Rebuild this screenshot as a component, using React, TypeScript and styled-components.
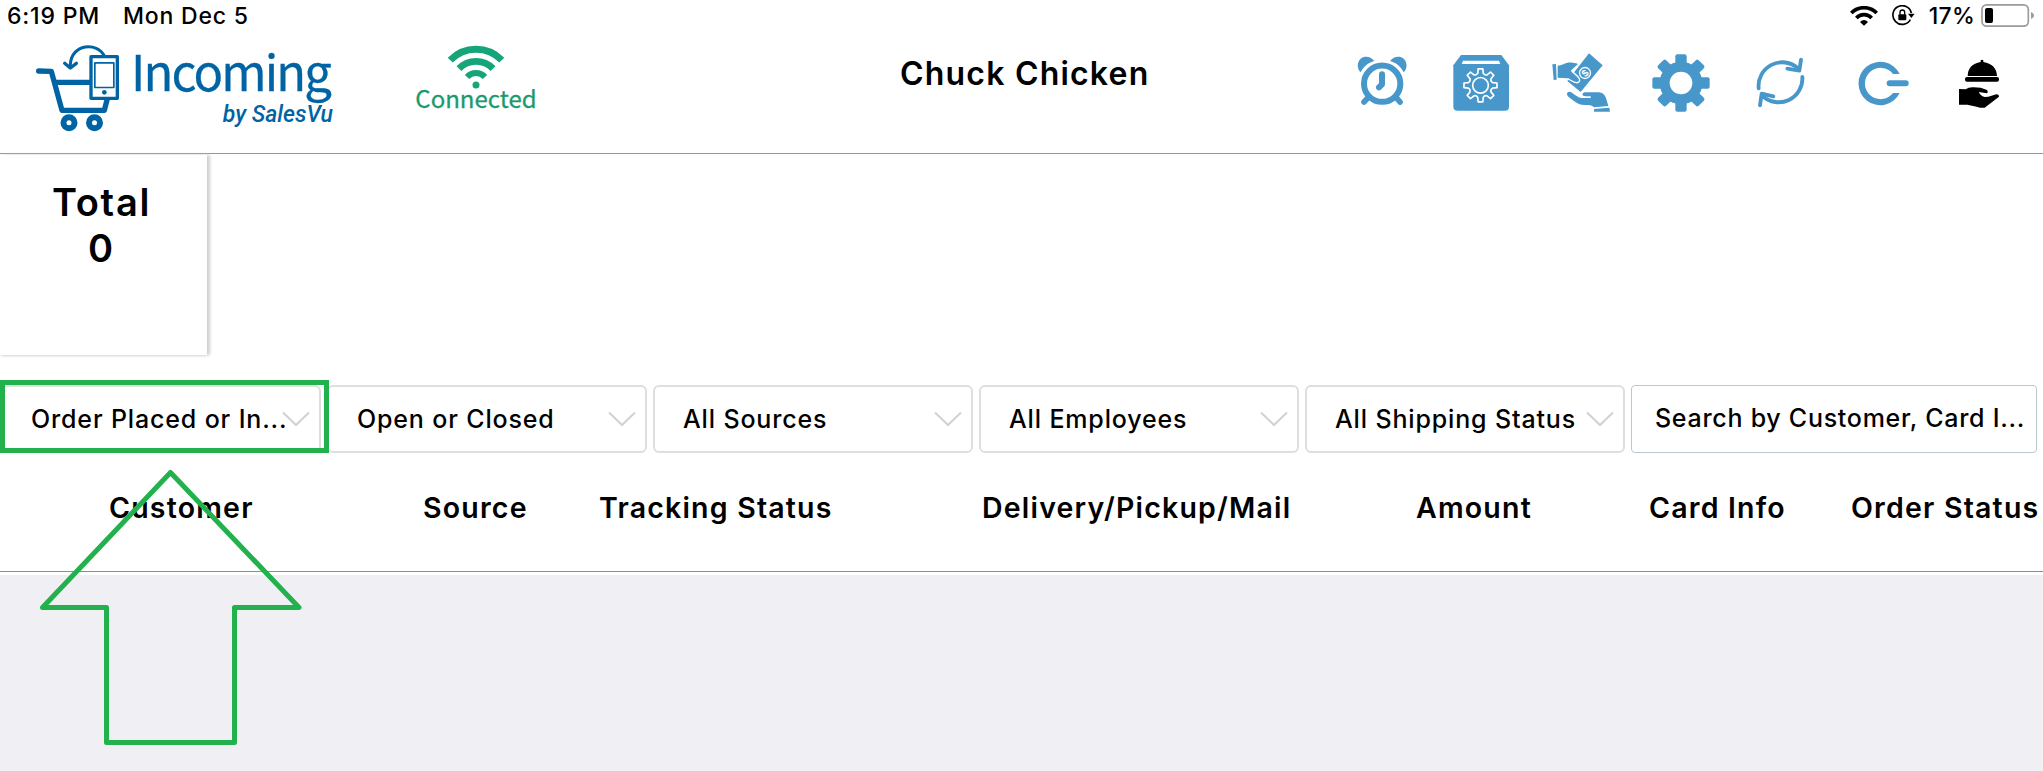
import styled, { createGlobalStyle } from "styled-components";

const BLUE = "#4797cb";
const NAVY = "#0064a4";
const GREEN = "#16a57a";

const filters = [
  "Order Placed or In...",
  "Open or Closed",
  "All Sources",
  "All Employees",
  "All Shipping Status",
];

const columns = [
  "Customer",
  "Source",
  "Tracking Status",
  "Delivery/Pickup/Mail",
  "Amount",
  "Card Info",
  "Order Status",
];

const polar = (cx: number, cy: number, r: number, deg: number) => {
  const a = (deg * Math.PI) / 180;
  return `${(cx + r * Math.cos(a)).toFixed(1)} ${(cy + r * Math.sin(a)).toFixed(1)}`;
};

// upward-facing arc, spread degrees to each side of the top
const arcPath = (cx: number, cy: number, r: number, spread: number) =>
  `M${polar(cx, cy, r, -90 - spread)}A${r} ${r} 0 0 1 ${polar(cx, cy, r, -90 + spread)}`;

// eight teeth with concave notches between them
const gearPath = (cx: number, cy: number, outer: number, root: number) => {
  let d = "";
  for (let i = 0; i < 8; i++) {
    const a = i * 45;
    d += `${i ? "L" : "M"}${polar(cx, cy, root, a - 13)}`;
    d += `L${polar(cx, cy, outer, a - 8)}L${polar(cx, cy, outer, a + 8)}`;
    d += `L${polar(cx, cy, root, a + 13)}`;
    d += `Q${polar(cx, cy, root - 5, a + 22.5)} ${polar(cx, cy, root, a + 32)}`;
  }
  return d + "Z";
};

function AlarmIcon() {
  const ear =
    "M92 127C81 116 80 97 92 86C104 76 122 79 133 93C114 98 100 110 92 127Z";
  return (
    <ToolIcon viewBox="33 39 240 240">
      <path d={ear} fill={BLUE} />
      <path d={ear} fill={BLUE} transform="matrix(-1 0 0 1 313 0)" />
      <g fill="none" stroke={BLUE} strokeWidth="18" strokeLinecap="round">
        <circle cx="156.5" cy="161" r="54.5" />
        <path d="M156 133V163L147 172" strokeLinejoin="round" />
        <path d="M114 203L102 216M199 203L210 216" strokeWidth="17" />
      </g>
    </ToolIcon>
  );
}

function PackageIcon() {
  return (
    <ToolIcon viewBox="333 39 240 240">
      <path
        d="M393 75H514L537 106V230Q537 242 525 242H383Q370 242 370 230V106Z"
        fill={BLUE}
      />
      <path d="M399 92H507L511 102H395Z" fill="#fff" />
      <g fill="none" stroke="#fff" strokeWidth="5" strokeLinejoin="round">
        <path d={gearPath(451.5, 166, 50, 37)} />
        <circle cx="451.5" cy="166" r="23.5" />
      </g>
    </ToolIcon>
  );
}

function PaymentIcon() {
  return (
    <ToolIcon viewBox="633 39 240 240">
      <path d="M777 70L818 106L752 186L712 153Z" fill={BLUE} />
      <circle cx="765" cy="129" r="16.5" fill="none" stroke="#fff" strokeWidth="4" />
      <Dollar x="765" y="139" transform="rotate(-48 765 129)">
        $
      </Dollar>
      <path
        d="M683 107C695 106 702 100 712 98C725 97 735 99 744 102L724 121C730 130 741 134 748 145C751 152 747 158 740 157C728 156 722 147 712 145L683 143Z"
        fill={BLUE}
      />
      <path
        d="M724 121C730 130 742 135 748 146C751 153 747 159 739 158C728 157 723 149 713 147"
        fill="none"
        stroke="#fff"
        strokeWidth="4"
      />
      <path d="M667 103L678 102L680 149L671 150Z" fill={BLUE} />
      <path
        d="M711 191C712 184 719 183 726 188C735 194 745 203 755 204H782V199H766C755 199 755 187 765 187H806C821 188 827 199 830 211L835 228L792 232C786 225 777 225 764 225C748 226 734 215 724 207C717 202 710 197 711 191Z"
        fill={BLUE}
      />
      <path d="M792 237L838 233L840 245H792Z" fill={BLUE} />
    </ToolIcon>
  );
}

function SettingsIcon() {
  return (
    <ToolIcon viewBox="933 39 240 240">
      <circle cx="1053" cy="159" r="49" fill="none" stroke={BLUE} strokeWidth="30" />
      {[0, 45, 90, 135, 180, 225, 270, 315].map((a) => (
        <rect
          key={a}
          x="1036"
          y="73"
          width="34"
          height="34"
          rx="6"
          fill={BLUE}
          transform={`rotate(${a} 1053 159)`}
        />
      ))}
    </ToolIcon>
  );
}

function RefreshIcon() {
  return (
    <ToolIcon viewBox="183 129 240 240">
      <g
        fill="none"
        stroke={BLUE}
        strokeWidth="11.5"
        strokeLinecap="round"
        strokeLinejoin="round"
      >
        <path d="M236 265A71 71 0 0 1 354 205" />
        <path d="M363 179L358 212L322 206" />
        <path d="M367 231A71 71 0 0 1 248 288" />
        <path d="M240 316L245 281L280 289" />
      </g>
    </ToolIcon>
  );
}

function LogoutIcon() {
  return (
    <ToolIcon viewBox="483 129 240 240">
      <path
        d="M659 222A65 65 0 1 0 659 279H639A47 47 0 1 1 639 222Z"
        fill={BLUE}
      />
      <rect x="620" y="241" width="66" height="18" rx="9" fill={BLUE} />
    </ToolIcon>
  );
}

function ServeIcon() {
  return (
    <ToolIcon viewBox="783 129 240 240">
      <path d="M863 228Q864 192 902 186V181Q906 177 910 181V186Q949 192 951 228Z" />
      <rect x="855" y="231" width="102" height="14" rx="6" />
      <path d="M837 267L857 268Q866 261 881 262L902 263L921 270Q926 278 920 280L897 276Q900 287 914 291L925 290L949 283Q957 283 957 290L914 323Q905 325 890 320L862 314H837Z" />
    </ToolIcon>
  );
}

function CartLogo() {
  return (
    <svg width="90" height="90" viewBox="105 129 270 270">
      <g
        fill="none"
        stroke={NAVY}
        strokeWidth="16"
        strokeLinecap="round"
        strokeLinejoin="round"
      >
        <path d="M116 213L154 214L186 331H313L321 300" />
        <path d="M164 247H270" strokeLinecap="butt" />
        <circle cx="207" cy="368" r="16.5" strokeWidth="18" />
        <circle cx="283.5" cy="368" r="16.5" strokeWidth="18" />
        <path
          d="M211 204V193C214 132 292 124 313 168"
          strokeWidth="9"
          strokeLinecap="butt"
        />
        <path d="M194 190L211 204L229 190" strokeWidth="10" />
      </g>
      <g fill="none" stroke={NAVY} strokeLinejoin="round">
        <rect x="273" y="170" width="79" height="125" fill="#fff" strokeWidth="10" />
        <rect x="284.5" y="188.5" width="57" height="74" strokeWidth="5" />
      </g>
      <circle cx="313" cy="277" r="7" fill={NAVY} />
    </svg>
  );
}

function SignalIcon() {
  return (
    <svg width="60" height="48" viewBox="258 129 180 144">
      <g fill="none" stroke={GREEN}>
        <path d={arcPath(348, 255, 107.5, 46)} strokeWidth="21" />
        <path d={arcPath(348, 255, 71, 46)} strokeWidth="20" />
        <path d={arcPath(348, 255, 36, 48)} strokeWidth="18" />
      </g>
      <circle cx="348" cy="255" r="10.5" fill={GREEN} />
    </svg>
  );
}

function WifiStatus() {
  return (
    <svg width="28" height="20" viewBox="510 15 84 60">
      <g fill="none" stroke="#000">
        <path d={arcPath(552, 73, 53, 46)} strokeWidth="11" />
        <path d={arcPath(552, 73, 32, 46)} strokeWidth="11" />
      </g>
      <path d="M552 74L540 63Q552 51 564 63Z" />
    </svg>
  );
}

function LockStatus() {
  return (
    <svg width="23" height="21" viewBox="635 14 69 63">
      <path d="M693 38A28 28 0 1 0 690 58" fill="none" stroke="#000" strokeWidth="5" />
      <path d="M683 40H703L693 53Z" />
      <rect x="654" y="42" width="24" height="18" rx="3" />
      <path d="M659 43V36A7 7 0 0 1 673 36V43" fill="none" stroke="#000" strokeWidth="4" />
    </svg>
  );
}

function BatteryStatus() {
  return (
    <svg width="54" height="23" viewBox="903 12 162 69">
      <rect
        x="906"
        y="14.5"
        width="139"
        height="64"
        rx="14"
        fill="none"
        stroke="#9b9b9b"
        strokeWidth="5"
      />
      <rect x="915" y="24" width="24" height="45" rx="6" />
      <path d="M1053 36Q1062 40 1062 46.5Q1062 53 1053 57Z" fill="#9b9b9b" />
    </svg>
  );
}

function Chevron() {
  return (
    <svg width="28" height="16" viewBox="0 0 28 16">
      <path d="M1 1.5L14 14L27 1.5" fill="none" stroke="#d1d1d6" strokeWidth="2" />
    </svg>
  );
}

export default function App() {
  return (
    <Page>
      <GlobalStyle />
      <StatusBar>
        <StatusText>6:19 PM</StatusText>
        <StatusText>Mon Dec 5</StatusText>
        <StatusIcons>
          <WifiStatus />
          <LockStatus />
          <StatusText>17%</StatusText>
          <BatteryStatus />
        </StatusIcons>
      </StatusBar>

      <Header>
        <Brand>
          <CartLogo />
          <BrandText>
            <BrandName>Incoming</BrandName>
            <BrandBy>by SalesVu</BrandBy>
          </BrandText>
        </Brand>
        <Connection>
          <SignalIcon />
          <ConnectionLabel>Connected</ConnectionLabel>
        </Connection>
        <StoreName>Chuck Chicken</StoreName>
        <Toolbar>
          <AlarmIcon />
          <PackageIcon />
          <PaymentIcon />
          <SettingsIcon />
          <RefreshIcon />
          <LogoutIcon />
          <ServeIcon />
        </Toolbar>
      </Header>

      <Summary>
        <TotalCard>
          <div>Total</div>
          <div>0</div>
        </TotalCard>
      </Summary>

      <FilterRow>
        {filters.map((label, i) => (
          <Filter key={label}>
            <span>{label}</span>
            <Chevron />
            {i === 0 && <Highlight />}
          </Filter>
        ))}
        <SearchBox>Search by Customer, Card I...</SearchBox>
      </FilterRow>

      <TableHead>
        {columns.map((name) => (
          <span key={name}>{name}</span>
        ))}
      </TableHead>
      <TableBody />

      <Arrow width="264" height="281" viewBox="38 467 264 281">
        <path
          d="M170.5 472.5L299 607.5H234.5V742.5H106.5V607.5H42.5Z"
          fill="none"
          stroke="#22b14c"
          strokeWidth="5"
          strokeLinejoin="round"
        />
      </Arrow>
    </Page>
  );
}

const GlobalStyle = createGlobalStyle`
  body {
    margin: 0;
    background-color: #fff;
  }
`;

const Page = styled.div`
  position: relative;
  display: flex;
  flex-direction: column;
  height: 771px;
  overflow: hidden;
  color: #000;
  font-family: Inter, "Liberation Sans", sans-serif;
`;

const StatusBar = styled.div`
  display: flex;
  gap: 23px;
  height: 32px;
  padding: 0 8px 0 7px;
`;

const StatusText = styled.span`
  font-size: 23px;
  font-weight: 500;
  line-height: 32px;
  letter-spacing: 0.8px;
  white-space: nowrap;
`;

const StatusIcons = styled.div`
  display: flex;
  align-items: center;
  gap: 14px;
  height: 31px;
  margin-left: auto;

  ${StatusText} {
    letter-spacing: 0.2px;
  }

  svg:last-child {
    margin-left: -8px;
  }
`;

const Header = styled.header`
  display: grid;
  grid-template-columns: 396px 160px 1fr 700px 12px;
  height: 121px;
  border-bottom: 1px solid #969696;
`;

const Brand = styled.div`
  display: flex;
  padding-left: 35px;

  svg {
    margin-top: 11px;
  }
`;

const BrandText = styled.div`
  display: flex;
  flex-direction: column;
  align-items: flex-end;
  width: 208px;
  color: ${NAVY};
`;

const BrandName = styled.div`
  margin-right: 3px;
  font-family: "Noto Sans CJK SC", sans-serif;
  font-size: 49px;
  line-height: 75px;
  letter-spacing: -1.9px;
  -webkit-text-stroke: 0.3px ${NAVY};
`;

const BrandBy = styled.div`
  font-family: Roboto, sans-serif;
  font-size: 23px;
  font-style: italic;
  font-weight: 500;
  line-height: 15px;
`;

const Connection = styled.div`
  display: flex;
  flex-direction: column;
  align-items: center;
  padding-top: 11px;
`;

const ConnectionLabel = styled.div`
  color: #1b9a6c;
  font-family: "Noto Sans CJK SC", sans-serif;
  font-size: 24px;
  line-height: 14px;
  -webkit-text-stroke: 0.3px #1b9a6c;
`;

const StoreName = styled.h1`
  margin: 0 0 0 344px;
  font-size: 32px;
  font-weight: 600;
  line-height: 83px;
  letter-spacing: 1.2px;
  white-space: nowrap;
`;

const Toolbar = styled.div`
  display: flex;
  gap: 20px;
  padding: 11px 10px 0;
`;

const ToolIcon = styled.svg`
  width: 80px;
  height: 80px;
`;

const Dollar = styled.text`
  fill: #fff;
  font-size: 27px;
  font-weight: 700;
  text-anchor: middle;
`;

const Summary = styled.section`
  height: 230px;
  padding-top: 1px;
`;

const TotalCard = styled.div`
  width: 203px;
  height: 176px;
  padding: 24px 4px 0 0;
  box-shadow: 3px 0 3px 0 #cfcfcf, 0 1px 2px #e4e4e4;
  font-size: 38px;
  font-weight: 600;
  line-height: 46px;
  letter-spacing: 1.7px;
  text-align: center;
`;

const FilterRow = styled.div`
  display: flex;
  gap: 6px;
  height: 68px;
  padding: 0 6px 0 1px;
  font-size: 25px;
  font-weight: 500;
  letter-spacing: 0.85px;
  white-space: nowrap;
`;

const Filter = styled.div`
  position: relative;
  display: flex;
  align-items: center;
  justify-content: space-between;
  box-sizing: border-box;
  width: 320px;
  padding: 0 9px 0 28px;
  border: 2px solid #dedede;
  border-radius: 6px;

  svg {
    flex: none;
    margin-left: -10px;
  }
`;

const Highlight = styled.div`
  position: absolute;
  top: -7px;
  left: -3px;
  box-sizing: border-box;
  width: 329px;
  height: 73px;
  border: 5px solid #22b14c;
  z-index: 1;
`;

const SearchBox = styled.div`
  flex: 1;
  padding-left: 23px;
  border: 1px solid #bcc6cf;
  border-radius: 4px;
  line-height: 65px;
  letter-spacing: 0.72px;
`;

const TableHead = styled.div`
  display: grid;
  grid-template-columns: 314px 176px 383px 434px 233px 202px 1fr;
  height: 118px;
  padding-left: 109px;
  border-bottom: 1px solid #8e8e8e;
  font-size: 28.5px;
  font-weight: 600;
  line-height: 110px;
  letter-spacing: 1.2px;
  white-space: nowrap;
`;

const TableBody = styled.div`
  flex: 1;
  margin-top: 3px;
  background-color: #efeff4;
`;

const Arrow = styled.svg`
  position: absolute;
  top: 467px;
  left: 38px;
`;
